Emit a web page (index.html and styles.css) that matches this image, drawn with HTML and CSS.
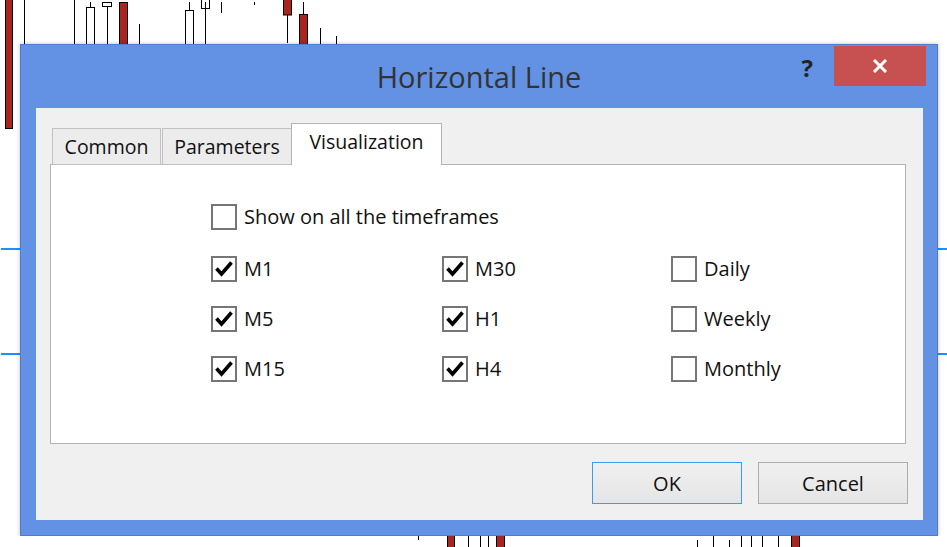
FILE: index.html
```html
<!DOCTYPE html>
<html lang="en">
<head>
  <meta charset="UTF-8">
  <title>Horizontal Line</title>
  <link rel="stylesheet" href="styles.css">
</head>
<body>

  <!-- chart behind the dialog -->
  <svg class="chart" width="947" height="547" viewBox="0 0 947 547">
    <g stroke="#000" stroke-width="1" fill="none">
      <rect x="5.5" y="-2" width="7" height="130.5" fill="#a8261f"/>
      <line x1="24.5" y1="0" x2="24.5" y2="44"/>
      <line x1="74.5" y1="0" x2="74.5" y2="44"/>
      <line x1="90.5" y1="2" x2="90.5" y2="7"/>
      <rect x="86.5" y="7.5" width="8" height="40" fill="#fff"/>
      <line x1="107.5" y1="7" x2="107.5" y2="44"/>
      <rect x="102.5" y="2.5" width="9" height="4" fill="#fff"/>
      <rect x="119.5" y="2.5" width="8" height="45" fill="#a8261f"/>
      <line x1="139.5" y1="24" x2="139.5" y2="44"/>
      <line x1="189.5" y1="2" x2="189.5" y2="10"/>
      <rect x="185.5" y="10.5" width="8" height="40" fill="#fff"/>
      <rect x="201.5" y="-4" width="8" height="12.5" fill="#fff"/>
      <line x1="205.5" y1="2" x2="205.5" y2="44"/>
      <line x1="221.5" y1="2" x2="221.5" y2="13"/>
      <line x1="254.5" y1="2" x2="254.5" y2="5"/>
      <rect x="283.5" y="-2" width="8" height="17" fill="#a8261f"/>
      <line x1="287.5" y1="15" x2="287.5" y2="43"/>
      <line x1="303.5" y1="2" x2="303.5" y2="14"/>
      <rect x="299.5" y="14.5" width="8" height="35" fill="#a8261f"/>
      <line x1="320.5" y1="28" x2="320.5" y2="44"/>
      <line x1="336.5" y1="36" x2="336.5" y2="44"/>

      <line x1="418.5" y1="534" x2="418.5" y2="540"/>
      <rect x="447.5" y="530" width="7" height="20" fill="#a8261f"/>
      <line x1="468.5" y1="530" x2="468.5" y2="547"/>
      <line x1="480.5" y1="530" x2="480.5" y2="547"/>
      <line x1="488.5" y1="530" x2="488.5" y2="547"/>
      <rect x="496.5" y="530" width="8" height="20" fill="#a8261f"/>
      <line x1="697.5" y1="540" x2="697.5" y2="547"/>
      <line x1="713.5" y1="530" x2="713.5" y2="547"/>
      <line x1="729.5" y1="540" x2="729.5" y2="547"/>
      <line x1="741.5" y1="530" x2="741.5" y2="547"/>
      <line x1="751.5" y1="530" x2="751.5" y2="547"/>
      <line x1="762.5" y1="530" x2="762.5" y2="547"/>
      <line x1="778.5" y1="530" x2="778.5" y2="547"/>
      <rect x="791.5" y="530" width="8" height="20" fill="#a8261f"/>
    </g>
    <g fill="#1e8fff">
      <rect x="1" y="248" width="20" height="2"/>
      <rect x="1" y="353" width="20" height="2"/>
      <rect x="936" y="248" width="11" height="2"/>
      <rect x="936" y="353" width="11" height="2"/>
    </g>
  </svg>

  <div class="dialog">
    <div class="titlebar">
      <div></div>
      <div class="title">Horizontal Line</div>
      <div class="controls">
        <span class="help">?</span>
        <button class="close">
          <svg width="18" height="14" viewBox="0 0 18 14">
            <path d="M3 1 L15 13 M15 1 L3 13" stroke="#fff" stroke-width="3"/>
          </svg>
        </button>
      </div>
    </div>

    <div class="content">
      <div class="tabs">
        <div class="tab">Common</div>
        <div class="tab">Parameters</div>
        <div class="tab active">Visualization</div>
      </div>

      <div class="panel">
        <label class="option show-all"><span class="box"></span>Show on all the timeframes</label>

        <div class="grid">
          <label class="option"><span class="box checked"><svg viewBox="0 0 22 22"><path d="M3.5 10.5 L8.5 16 L18.5 4.5"/></svg></span>M1</label>
          <label class="option"><span class="box checked"><svg viewBox="0 0 22 22"><path d="M3.5 10.5 L8.5 16 L18.5 4.5"/></svg></span>M30</label>
          <label class="option"><span class="box"></span>Daily</label>

          <label class="option"><span class="box checked"><svg viewBox="0 0 22 22"><path d="M3.5 10.5 L8.5 16 L18.5 4.5"/></svg></span>M5</label>
          <label class="option"><span class="box checked"><svg viewBox="0 0 22 22"><path d="M3.5 10.5 L8.5 16 L18.5 4.5"/></svg></span>H1</label>
          <label class="option"><span class="box"></span>Weekly</label>

          <label class="option"><span class="box checked"><svg viewBox="0 0 22 22"><path d="M3.5 10.5 L8.5 16 L18.5 4.5"/></svg></span>M15</label>
          <label class="option"><span class="box checked"><svg viewBox="0 0 22 22"><path d="M3.5 10.5 L8.5 16 L18.5 4.5"/></svg></span>H4</label>
          <label class="option"><span class="box"></span>Monthly</label>
        </div>
      </div>

      <div class="buttons">
        <button class="btn default">OK</button>
        <button class="btn">Cancel</button>
      </div>
    </div>
  </div>

</body>
</html>
```

FILE: styles.css
```css
html {
  height: 547px;
  overflow: hidden;
  background: #fff;
}
body {
  margin: 0;
  font-family: "Open Sans", "Liberation Sans", sans-serif;
  padding-top: 44px;
}
.chart {
  position: absolute;
  top: 0;
  left: 0;
}

.dialog {
  position: relative;
  z-index: 1;
  box-sizing: border-box;
  width: 918px;
  height: 492px;
  margin-left: 20px;
  padding: 0 14px 15px 15px;
  background: #6391e3;
  border: 1px solid #4f7ccc;
  box-shadow: 0 0 4px rgba(0, 0, 0, 0.25);
  display: flex;
  flex-direction: column;
}

.titlebar {
  display: grid;
  grid-template-columns: 1fr auto 1fr;
  height: 63px;
  margin: 0 -14px 0 -15px;
}
.title {
  align-self: center;
  font-size: 29px;
  color: #333;
}
.controls {
  justify-self: end;
  display: flex;
  align-items: flex-start;
  padding: 1px 11px 0 0;
}
.help {
  font-size: 24px;
  font-weight: bold;
  color: #222;
  line-height: 1;
  margin: 10px 21px 0 0;
}
.close {
  width: 92px;
  height: 40px;
  border: none;
  padding: 0;
  background: #c75050;
  display: flex;
  align-items: center;
  justify-content: center;
}

.content {
  flex: 1;
  background: #f0f0f0;
  padding: 15px 17px 0 14px;
  display: flex;
  flex-direction: column;
  font-size: 19.5px;
  color: #111;
}

.tabs {
  display: flex;
  align-items: flex-end;
  margin: 0 0 -1px 2px;
  position: relative;
  z-index: 1;
}
.tab {
  box-sizing: border-box;
  height: 37px;
  border: 1px solid #c2c2c2;
  background: #ececec;
  display: flex;
  align-items: center;
  justify-content: center;
  padding-bottom: 1px;
}
.tab:nth-child(1) {
  width: 109px;
  margin-right: 1px;
}
.tab:nth-child(2) {
  width: 130px;
}
.tab.active {
  width: 151px;
  height: 42px;
  margin-left: -1px;
  background: #fff;
  border-color: #b4b4b4;
  border-bottom: none;
  padding-bottom: 6px;
}

.panel {
  box-sizing: border-box;
  height: 280px;
  background: #fff;
  border: 1px solid #b4b4b4;
  padding: 38px 0 0 160px;
}
.option {
  display: flex;
  align-items: center;
  gap: 7px;
  font-size: 20px;
}
.box {
  box-sizing: border-box;
  width: 26px;
  height: 26px;
  border: 2px solid #767676;
  background: #fff;
  flex: none;
}
.box svg {
  display: block;
  width: 22px;
  height: 22px;
}
.box path {
  fill: none;
  stroke: #000;
  stroke-width: 3.6;
}
.grid {
  display: grid;
  grid-template-columns: 231px 229px auto;
  row-gap: 23px;
  margin-top: 25px;
}

.buttons {
  display: flex;
  justify-content: flex-end;
  gap: 16px;
  margin: 18px -2px 0 0;
}
.btn {
  box-sizing: border-box;
  width: 150px;
  height: 42px;
  font-family: inherit;
  font-size: 20px;
  color: #111;
  background: linear-gradient(#f0f0f0, #e5e5e5);
  border: 1px solid #acacac;
  padding: 0;
}
.btn.default {
  border-color: #3c9bf0;
}
```
